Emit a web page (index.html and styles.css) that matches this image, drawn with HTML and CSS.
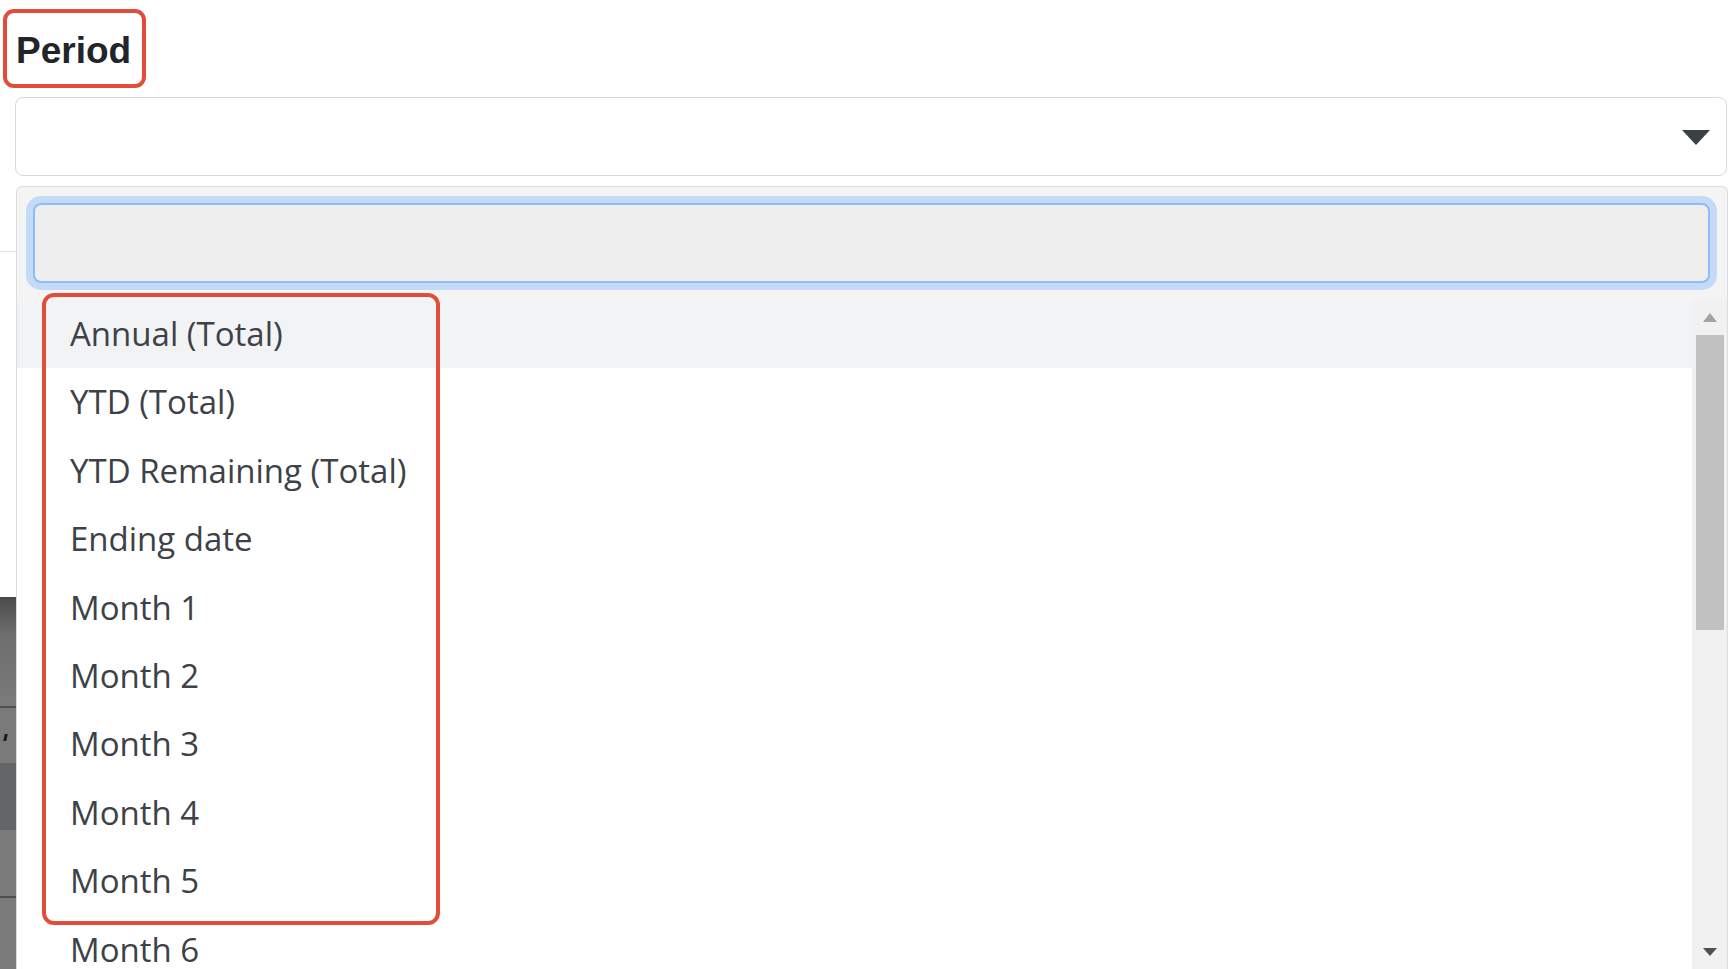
FILE: index.html
```html
<!DOCTYPE html>
<html lang="en">
<head>
<meta charset="utf-8">
<title>Period</title>
<link rel="stylesheet" href="styles.css">
</head>
<body>
<div class="page">
  <div class="field-label">Period</div>
  <div class="select">
    <span class="caret"></span>
  </div>
  <div class="dropdown-row">
    <div class="backdrop">
      <div class="bd-white bd-top"></div>
      <div class="bd-line-light"></div>
      <div class="bd-white bd-mid"></div>
      <div class="bd-grad"></div>
      <div class="bd-line-dark"></div>
      <div class="bd-gray bd-h55"><span class="bd-mark"></span></div>
      <div class="bd-darker"></div>
      <div class="bd-gray bd-h68"></div>
      <div class="bd-line-dark"></div>
      <div class="bd-gray bd-rest"></div>
    </div>
    <div class="panel">
      <div class="search-wrap">
        <input class="search" type="text" aria-label="Search">
      </div>
      <div class="results">
        <ul class="options">
          <li class="option active">Annual (Total)</li>
          <li class="option">YTD (Total)</li>
          <li class="option">YTD Remaining (Total)</li>
          <li class="option">Ending date</li>
          <li class="option">Month 1</li>
          <li class="option">Month 2</li>
          <li class="option">Month 3</li>
          <li class="option">Month 4</li>
          <li class="option">Month 5</li>
          <li class="option">Month 6</li>
        </ul>
        <div class="scrollbar">
          <span class="sb-up"></span>
          <span class="sb-thumb"></span>
          <span class="sb-down"></span>
        </div>
      </div>
    </div>
  </div>
  <div class="annot"></div>
</div>
</body>
</html>
```
FILE: styles.css
```css
html, body {
  margin: 0;
  padding: 0;
  background: #ffffff;
  overflow: hidden;
}

.page {
  position: relative;
  width: 1729px;
  height: 969px;
  overflow: hidden;
}

.field-label {
  box-sizing: border-box;
  width: 143px;
  height: 79px;
  margin: 9px 0 0 3px;
  padding: 17px 0 0 9px;
  border: 4px solid #e24d3b;
  border-radius: 11px;
  font-family: "Liberation Sans", Arial, sans-serif;
  font-weight: 700;
  font-size: 37px;
  line-height: 42px;
  color: #212529;
}

.select {
  box-sizing: border-box;
  width: 1712px;
  height: 79px;
  margin: 9px 0 0 15px;
  border: 1px solid #d6d9dd;
  border-radius: 8px;
  background: #ffffff;
  display: flex;
  align-items: center;
  justify-content: flex-end;
  padding: 2px 16px 0 0;
}

.caret {
  width: 0;
  height: 0;
  border-left: 14px solid transparent;
  border-right: 14px solid transparent;
  border-top: 15px solid #3b4046;
}

.dropdown-row {
  display: flex;
  margin-top: 10px;
  height: 783px;
}

.backdrop {
  width: 16px;
  flex: none;
  display: flex;
  flex-direction: column;
}

.bd-white { background: #ffffff; }
.bd-top { height: 65px; }
.bd-mid { height: 345px; }
.bd-line-light { height: 1px; background: #e3e3e3; }
.bd-line-dark { height: 2px; background: #4f4f4f; }
.bd-grad {
  height: 109px;
  background: linear-gradient(#4a4a4a, #6e6e6e 35%, #7b7b7b);
}
.bd-gray { background: #7a7a7a; position: relative; }
.bd-h55 { height: 55px; }
.bd-h68 { height: 66px; }
.bd-rest { flex: 1; }
.bd-darker { height: 67px; background: #626468; }
.bd-mark {
  position: absolute;
  left: 4px;
  top: 26px;
  width: 3px;
  height: 7px;
  background: #1a1a2a;
  transform: skewX(-12deg);
}

.panel {
  box-sizing: border-box;
  width: 1712px;
  flex: none;
  border: 1px solid #dadcde;
  border-bottom: none;
  border-radius: 6px 6px 0 0;
  background: #f4f4f4;
  display: flex;
  flex-direction: column;
}

.search-wrap {
  padding: 16px 17px 17px 16px;
}

.search {
  display: block;
  box-sizing: border-box;
  width: 100%;
  height: 80px;
  margin: 0;
  border: 2px solid #8fbcf2;
  border-radius: 8px;
  background: #eeeeee;
  box-shadow: 0 0 0 7px #c4dbf7;
  outline: none;
}

.results {
  flex: 1;
  display: flex;
  background: #ffffff;
  overflow: hidden;
}

.options {
  flex: 1;
  list-style: none;
  margin: 0;
  padding: 0;
}

.option {
  height: 68.4px;
  line-height: 68.4px;
  padding-left: 53px;
  font-family: "Open Sans", "Noto Sans", sans-serif;
  font-size: 33px;
  color: #3c4248;
  white-space: nowrap;
}

.option.active {
  background: #f2f3f5;
}

.scrollbar {
  width: 35px;
  flex: none;
  background: #f1f1f1;
  display: flex;
  flex-direction: column;
  align-items: center;
}

.sb-up {
  margin-top: 13px;
  width: 0;
  height: 0;
  border-left: 7.5px solid transparent;
  border-right: 7.5px solid transparent;
  border-bottom: 9px solid #a3a3a3;
}

.sb-thumb {
  margin-top: 13px;
  width: 28px;
  height: 295px;
  background: #c1c1c1;
}

.sb-down {
  margin-top: auto;
  margin-bottom: 13px;
  width: 0;
  height: 0;
  border-left: 7.5px solid transparent;
  border-right: 7.5px solid transparent;
  border-top: 8px solid #505050;
}

.annot {
  position: absolute;
  left: 42px;
  top: 293px;
  box-sizing: border-box;
  width: 398px;
  height: 632px;
  border: 4px solid #e24d3b;
  border-radius: 12px;
}
```
